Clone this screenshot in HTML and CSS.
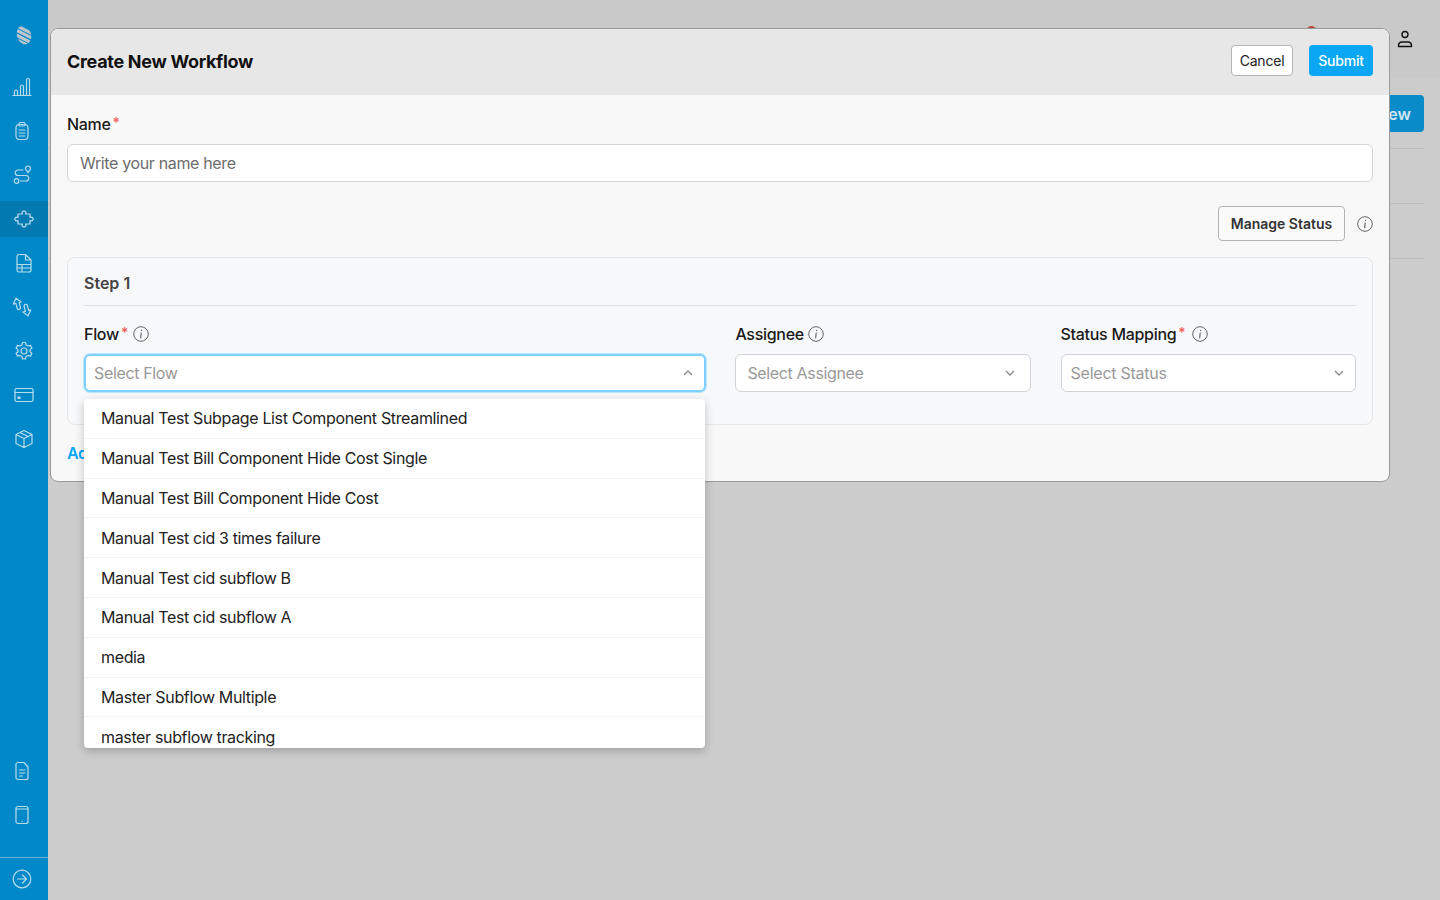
FILE: index.html
```html
<!DOCTYPE html>
<html lang="en">
<head>
  <meta charset="UTF-8" />
  <title>Create New Workflow</title>
  <link rel="stylesheet" href="styles.css">
</head>
<body>
  <aside class="sidebar">
    <div class="nav-top">
      <div class="nav-item logo">
        <svg width="18" height="20" viewBox="0 0 18 20">
          <defs>
            <clipPath id="logo-clip"><ellipse cx="9" cy="10" rx="7" ry="9.500" transform="rotate(-18 9 10)"/></clipPath>
          </defs>
          <g clip-path="url(#logo-clip)" stroke="#bcc6cb" stroke-width="3.200">
            <path d="M0 0 18 9M0 4.500 18 13.500M-1 9 17 18M-1 13.500 17 22.500"/>
          </g>
        </svg>
      </div>
      <div class="nav-item">
        <svg class="icon" viewBox="0 0 20 20"><path d="M1 18.500h18M2.500 18.500v-4a1.500 1.500 0 0 1 3 0v4M8.500 18.500V9.500a1.500 1.500 0 0 1 3 0v9M14.500 18.500V3a1.500 1.500 0 0 1 3 0v15.500"/></svg>
      </div>
      <div class="nav-item">
        <svg class="icon" viewBox="0 0 20 20"><rect x="4" y="3.500" width="12" height="15" rx="3.500"/><rect x="7" y="1.500" width="6" height="3.500" rx="1.200"/><path d="M7 9h6M7 12h6M7 15h6"/></svg>
      </div>
      <div class="nav-item">
        <svg class="icon" viewBox="0 0 20 20"><path d="M16 7.500c-1.500-1.500-2.500-2.500-2.500-4a2.500 2.500 0 0 1 5 0c0 1.500-1 2.500-2.500 4Z"/><circle cx="4.500" cy="16" r="2.300"/><path d="M11 5H6a2.700 2.700 0 0 0 0 5.500h8a2.700 2.700 0 0 1 0 5.500H8.500"/></svg>
      </div>
      <div class="nav-item active shift">
        <svg class="icon" viewBox="0 0 20 20"><path d="M4 5H8.500A1.900 1.900 0 1 1 11.500 5H16V8.500A1.900 1.900 0 1 1 16 11.500V15H11.500A1.900 1.900 0 1 1 8.500 15H4V11.500A1.900 1.900 0 1 1 4 8.500Z"/></svg>
      </div>
      <div class="nav-item shift">
        <svg class="icon" viewBox="0 0 20 20"><path d="M3 3.500a2 2 0 0 1 2-2h6.500l5.500 5.500v10a2 2 0 0 1-2 2H5a2 2 0 0 1-2-2ZM11.500 1.500V7H17M3 11.500h14M3 15h14M8 11.500v7"/></svg>
      </div>
      <div class="nav-item">
        <svg class="icon" viewBox="0 0 20 20">
          <path transform="rotate(-15 5.500 7)" d="M5.500 1 9.500 6H7.500V11a1.700 1.700 0 0 1-3.400 0V6H1.500Z"/>
          <path transform="rotate(-15 14.500 13)" d="M14.500 19 18.500 14H16.500V9a1.700 1.700 0 0 0-3.400 0V14H10.500Z"/>
        </svg>
      </div>
      <div class="nav-item shift">
        <svg class="icon" viewBox="0 0 20 20"><circle cx="10" cy="10" r="3"/><path d="M8.500 1.500h3l.6 2.400 1.900 1.100 2.400-.7 1.500 2.600-1.800 1.700v2.200l1.800 1.700-1.500 2.600-2.400-.7-1.900 1.100-.6 2.400h-3l-.6-2.400-1.900-1.100-2.400.7-1.500-2.600 1.800-1.700V8.600L2.100 6.900l1.500-2.600 2.400.7 1.900-1.100Z"/></svg>
      </div>
      <div class="nav-item shift">
        <svg class="icon" viewBox="0 0 20 20"><rect x="1" y="3.500" width="18" height="13" rx="1.500"/><path d="M1 7.500h18"/><rect x="4" y="12" width="2" height="1.500" fill="#b9dcec"/></svg>
      </div>
      <div class="nav-item shift">
        <svg class="icon" viewBox="0 0 20 20"><path d="M10 1.500 18 5.500v9L10 18.500 2 14.500v-9ZM2 5.500 10 9.500l8-4M10 9.500v9M6 3.500l8 4"/></svg>
      </div>
    </div>
    <div class="nav-bottom">
      <div class="nav-item">
        <svg class="icon" viewBox="0 0 20 20"><path d="M4 3.500a2 2 0 0 1 2-2h6l4 4.500v10.500a2 2 0 0 1-2 2H6a2 2 0 0 1-2-2ZM7.500 9h5.500M7.500 12h5.500M7.500 15h3"/></svg>
      </div>
      <div class="nav-item">
        <svg class="icon" viewBox="0 0 20 20"><rect x="4" y="1.500" width="12" height="17" rx="2"/><path d="M4 4h12M10 16.300h.1"/></svg>
      </div>
    </div>
    <div class="nav-footer">
      <svg class="icon" viewBox="0 0 20 20"><circle cx="10" cy="10" r="8.800"/><path d="M5.500 10h9M10.500 6l4 4-4 4"/></svg>
    </div>
  </aside>

  <main class="page">
    <header class="topbar">
      <span class="bell-dot"></span>
      <svg class="user-icon" viewBox="0 0 20 20"><circle cx="10" cy="5.500" r="3"/><path d="M3.500 17.500v-1.500a3.500 3.500 0 0 1 3.500-3h6a3.500 3.500 0 0 1 3.500 3v1.500Z"/></svg>
    </header>
    <div class="page-actions"><button class="new-btn">Add New</button></div>
    <div class="ghost-row"></div>
    <div class="ghost-row"></div>
    <div class="ghost-row"></div>
  </main>

  <section class="modal">
    <div class="modal-head">
      <h1>Create New Workflow</h1>
      <div class="head-actions">
        <button class="btn-cancel">Cancel</button>
        <button class="btn-submit">Submit</button>
      </div>
    </div>
    <div class="modal-body">
      <label class="label name-label">Name<span class="req">*</span></label>
      <div class="text-input">Write your name here</div>

      <div class="status-row">
        <button class="btn-manage">Manage Status</button>
        <svg class="info" viewBox="0 0 16 16"><use href="#info-icon"/></svg>
      </div>

      <div class="step-card">
        <div class="step-title">Step 1</div>
        <div class="step-grid">
          <div class="field">
            <label class="label">Flow<span class="req">*</span><svg class="info gap-left" viewBox="0 0 16 16"><use href="#info-icon"/></svg></label>
            <div class="select focused">
              <span>Select Flow</span>
              <svg class="chev" viewBox="0 0 12 12"><path d="M2 8 6 4l4 4"/></svg>
            </div>
            <ul class="dropdown">
              <li>Manual Test Subpage List Component Streamlined</li>
              <li>Manual Test Bill Component Hide Cost Single</li>
              <li>Manual Test Bill Component Hide Cost</li>
              <li>Manual Test cid 3 times failure</li>
              <li>Manual Test cid subflow B</li>
              <li>Manual Test cid subflow A</li>
              <li>media</li>
              <li>Master Subflow Multiple</li>
              <li>master subflow tracking</li>
            </ul>
          </div>
          <div class="field">
            <label class="label">Assignee<svg class="info" viewBox="0 0 16 16"><use href="#info-icon"/></svg></label>
            <div class="select assignee">
              <span>Select Assignee</span>
              <svg class="chev" viewBox="0 0 12 12"><path d="M2 4l4 4 4-4"/></svg>
            </div>
          </div>
          <div class="field">
            <label class="label">Status Mapping<span class="req">*</span><svg class="info gap-wide" viewBox="0 0 16 16"><use href="#info-icon"/></svg></label>
            <div class="select status">
              <span>Select Status</span>
              <svg class="chev" viewBox="0 0 12 12"><path d="M2 4l4 4 4-4"/></svg>
            </div>
          </div>
        </div>
      </div>

      <a class="add-step">Add</a>
    </div>
  </section>

  <svg width="0" height="0" class="defs">
    <defs>
      <g id="info-icon">
        <circle cx="8" cy="8" r="7.300" fill="none" stroke="#666" stroke-width="1"/>
        <path d="M8.500 4.400h.1M8.200 7 7.700 11.800" fill="none" stroke="#666" stroke-width="1.200" stroke-linecap="round"/>
      </g>
    </defs>
  </svg>
</body>
</html>
```

FILE: styles.css
```css
* {
  box-sizing: border-box;
}

html, body {
  height: 100%;
}

body {
  margin: 0;
  display: flex;
  height: 900px;
  overflow: hidden;
  font-family: Inter, "Liberation Sans", sans-serif;
  font-size: 16px;
  letter-spacing: -0.35px;
  color: #1a1a1a;
  background: #cccccc;
}

.defs {
  position: absolute;
}

/* sidebar */
.sidebar {
  width: 48px;
  flex-shrink: 0;
  display: flex;
  flex-direction: column;
  background: #0088c9;
}

.nav-top {
  flex: 1;
  display: flex;
  flex-direction: column;
  gap: 8px;
  padding-top: 17px;
}

.nav-bottom {
  display: flex;
  flex-direction: column;
  gap: 8px;
  padding-bottom: 24px;
}

.nav-item {
  height: 36px;
  display: flex;
  align-items: center;
  padding-left: 12px;
}

.nav-item.shift {
  padding-left: 14px;
}

.nav-item.logo {
  padding-left: 15px;
  margin-bottom: 8px;
}

.nav-item.active {
  background: #0379b2;
}

.nav-footer {
  height: 43px;
  border-top: 1px solid #66b3da;
  display: flex;
  align-items: center;
  padding-left: 12px;
}

.icon {
  width: 20px;
  height: 20px;
  fill: none;
  stroke: #b9dcec;
  stroke-width: 1.200;
  stroke-linecap: round;
  stroke-linejoin: round;
}

/* dimmed page behind the modal */
.page {
  flex: 1;
  padding-right: 16px;
}

.topbar {
  height: 78px;
  margin-right: -16px;
  background: #c9c9c9;
  position: relative;
}

.bell-dot {
  position: absolute;
  left: 1259px;
  top: 26px;
  width: 9px;
  height: 9px;
  border-radius: 50%;
  background: #b5493a;
}

.user-icon {
  position: absolute;
  left: 1347px;
  top: 29px;
  width: 20px;
  height: 20px;
  fill: none;
  stroke: #111;
  stroke-width: 1.400;
  stroke-linejoin: round;
}

.page-actions {
  display: flex;
  justify-content: flex-end;
  padding-top: 17px;
  height: 70px;
}

.new-btn {
  height: 37px;
  padding: 0 13px;
  border: none;
  border-radius: 4px;
  background: #0a8ccb;
  color: #cfe6f2;
  font: 600 16px Inter, sans-serif;
}

.ghost-row {
  height: 55px;
  border-top: 1px solid #bdbdbd;
}

/* modal */
.modal {
  position: absolute;
  left: 50px;
  top: 28px;
  width: 1340px;
  height: 454px;
  border: 1px solid #9a9a9a;
  border-radius: 8px;
  background: #f8f8f8;
}

.modal-head {
  height: 66px;
  padding: 0 16px 3px;
  display: flex;
  align-items: center;
  justify-content: space-between;
  background: #e7e7e7;
  border-radius: 7px 7px 0 0;
}

.modal-head h1 {
  margin: 1px 0 0;
  font-size: 18px;
  font-weight: 700;
  letter-spacing: -0.3px;
  color: #111;
}

.head-actions {
  display: flex;
  gap: 16px;
}

.btn-cancel, .btn-submit {
  height: 31px;
  border-radius: 4px;
  font-family: Inter, sans-serif;
  font-size: 14px;
  letter-spacing: -0.2px;
}

.btn-cancel {
  width: 62px;
  padding: 0;
  background: #fff;
  border: 1px solid #b4b4b4;
  color: #222;
}

.btn-submit {
  width: 64px;
  padding: 0;
  background: #0aa7f5;
  border: none;
  color: #fff;
  font-weight: 500;
}

.modal-body {
  padding: 19px 16px 0;
}

.label {
  display: flex;
  align-items: center;
  height: 20px;
  font-size: 16px;
  font-weight: 500;
  letter-spacing: -0.3px;
  color: #1a1a1a;
}

.req {
  align-self: flex-start;
  margin: 2px 0 0 2px;
  font-size: 14px;
  line-height: 14px;
  color: #f0605c;
}

.text-input {
  height: 38px;
  margin-top: 10px;
  padding: 0 12px;
  display: flex;
  align-items: center;
  background: #fff;
  border: 1px solid #d6d6d6;
  border-radius: 6px;
  color: #6c6c6c;
}

.status-row {
  display: flex;
  justify-content: flex-end;
  align-items: center;
  gap: 12px;
  margin-top: 24px;
}

.btn-manage {
  width: 127px;
  height: 35px;
  padding: 0;
  background: #fafafa;
  border: 1px solid #b4b4b4;
  border-radius: 4px;
  font: 600 14px Inter, sans-serif;
  color: #333;
}

.info {
  width: 16px;
  height: 16px;
  margin-left: 4px;
  flex-shrink: 0;
}

.status-row .info {
  margin-left: 0;
}

.info.gap-left {
  margin-left: 5px;
}

.info.gap-wide {
  margin-left: 7px;
}

.step-card {
  height: 168px;
  margin-top: 16px;
  padding: 16px;
  border: 1px solid #e4e6e8;
  border-radius: 8px;
  background: #f7f8f9;
}

.step-title {
  height: 32px;
  font-weight: 600;
  letter-spacing: 0;
  color: #444;
  line-height: 19px;
  border-bottom: 1px solid #dfe1e3;
}

.step-grid {
  display: grid;
  grid-template-columns: 622px 295.800px 295.200px;
  column-gap: 29.400px;
  margin-top: 18px;
}

.field {
  position: relative;
}

.select {
  height: 38px;
  margin-top: 10px;
  padding: 0 9px;
  display: flex;
  align-items: center;
  justify-content: space-between;
  background: #fff;
  border: 1px solid #cfd2d6;
  border-radius: 6px;
  color: #999;
}

.select.assignee {
  padding: 0 12px 0 11px;
}

.select.status {
  padding-right: 8px;
  letter-spacing: -0.25px;
}

.select.focused {
  padding: 0 8px;
  border: 2px solid #7fd0fc;
  box-shadow: 0 0 0 1px #b8e6ff;
}

.chev {
  width: 12px;
  height: 12px;
  margin-right: 2px;
  fill: none;
  stroke: #8a8a8a;
  stroke-width: 1.300;
}

.dropdown {
  position: absolute;
  left: 0;
  top: 75px;
  z-index: 5;
  width: 621px;
  height: 349px;
  margin: 0;
  padding: 0;
  list-style: none;
  overflow: hidden;
  background: #fff;
  border-radius: 4px;
  box-shadow: 0 3px 10px rgba(0, 0, 0, 0.22);
}

.dropdown li {
  height: 39.800px;
  padding: 0 17px;
  display: flex;
  align-items: center;
  border-bottom: 1px solid #f3f3f3;
  color: #222;
}

.add-step {
  display: block;
  margin-top: 18px;
  font-weight: 600;
  color: #0aa7f5;
}
```
